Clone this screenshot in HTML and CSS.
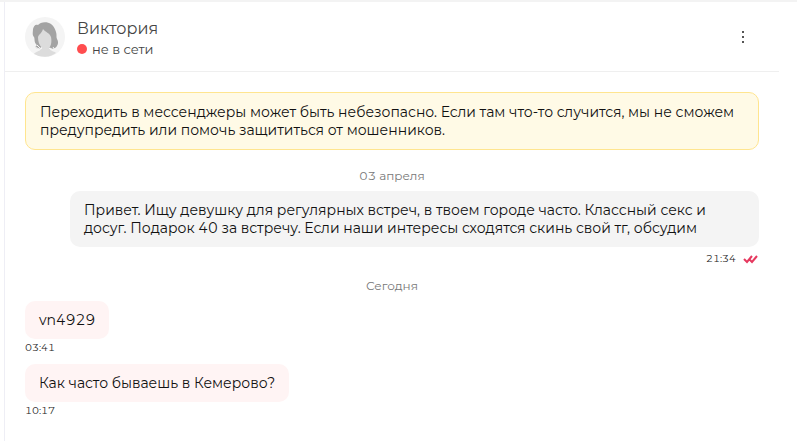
FILE: index.html
```html
<!DOCTYPE html>
<html lang="ru">

<head>
    <meta charset="UTF-8">
    <meta name="viewport" content="width=device-width, initial-scale=1.0">
    <title>Виктория</title>
    <link rel="stylesheet" href="styles.css">
</head>

<body>
    <main class="chat">
        <header class="chat-header">
            <svg class="avatar" viewBox="0 0 40 40" aria-hidden="true">
                <circle cx="20" cy="20" r="20" fill="#f4f4f4"/>
                <path d="M9 37 C11 34 14 35 16 32 H25 C25 34 29 34 31 36 A20 20 0 0 1 9 37Z" fill="#dcdcdc"/>
                <path d="M13 8 C15 5 22 4 26 7 C29 9 30 12 31 15 C32 18 31 20 32 22 C34 25 33 29 30 31 C28 32 25 32 24 30 L16 30 C15 32 12 32 10 30 C12 29 12 28 11 27 C9 25 10 22 9 20 C7 18 8 15 8 12 C9 9 10 7 13 8Z" fill="#a3a3a3"/>
                <path d="M18 12 C20 15 25 16 26 20 C27 25 26 29 24 31 V34 H17 V31 C14 28 13 24 13 20 C14 17 17 16 18 12Z" fill="#dcdcdc"/>
                <path d="M10 30 L14 32 M12 28 L15 31 M25 31 L28 33 M28 30 L30 33" stroke="#f4f4f4" stroke-width="1"/>
            </svg>
            <div class="user">
                <div class="user-name">Виктория</div>
                <div class="user-status"><span class="dot"></span>не в сети</div>
            </div>
            <button class="menu-button" type="button" aria-label="Меню">
                <svg width="4" height="14" viewBox="0 0 4 14">
                    <path d="M1 1h2v2H1zM1 6h2v2H1zM1 11h2v2H1z" fill="#555"/>
                </svg>
            </button>
        </header>

        <section class="messages">
            <p class="warning">Переходить в мессенджеры может быть небезопасно. Если там что-то случится, мы не сможем предупредить или помочь защититься от мошенников.</p>

            <div class="date">03 апреля</div>
            <div class="message message-out">
                <p class="bubble">Привет. Ищу девушку для регулярных встреч, в твоем городе часто. Классный секс и досуг. Подарок 40 за встречу. Если наши интересы сходятся скинь свой тг, обсудим</p>
                <div class="time">
                    21:34
                    <svg width="16" height="10" viewBox="0 0 16 10" aria-label="Прочитано">
                        <path d="M1 5 L4 8 L9 2 M7 6 L9 8 L14 2" fill="none" stroke="#e6395f" stroke-width="2"/>
                    </svg>
                </div>
            </div>

            <div class="date">Сегодня</div>
            <div class="message">
                <p class="bubble">vn4929</p>
                <div class="time">03:41</div>
            </div>
            <div class="message">
                <p class="bubble">Как часто бываешь в Кемерово?</p>
                <div class="time">10:17</div>
            </div>
        </section>
    </main>
</body>

</html>
```

FILE: styles.css
```css
* {
    box-sizing: border-box;
}

body {
    margin: 0;
    border-top: 2px solid #f3f3f3;
    background-color: #fff;
    color: #111;
    font-family: Montserrat, Inter, sans-serif;
    font-size: 14px;
    font-variant-numeric: tabular-nums;
    line-height: 18px;
}

p {
    margin: 0;
}

.chat {
    min-height: calc(100vh - 2px);
    margin-left: 4px;
    margin-right: 18px;
    border-left: 1px solid #eeeef5;
}

.chat-header {
    display: flex;
    align-items: center;
    height: 70px;
    padding: 0 20px;
    border-bottom: 1px solid #efefef;
}

.avatar {
    width: 40px;
    height: 40px;
    margin-right: 12px;
}

.user {
    flex: 1;
    padding-top: 2px;
    color: #444;
}

.user-name {
    font-size: 16px;
    line-height: 22px;
}

.user-status {
    display: flex;
    align-items: center;
    gap: 5px;
    font-size: 13px;
}

.dot {
    width: 10px;
    height: 10px;
    border-radius: 50%;
    background-color: #ff4d4f;
}

.menu-button {
    display: flex;
    align-items: center;
    justify-content: center;
    width: 32px;
    height: 32px;
    padding: 0;
    border: none;
    background: none;
    cursor: pointer;
}

.messages {
    padding: 20px 20px 0;
}

.warning {
    margin-bottom: 15px;
    padding: 10px 14px;
    border: 1px solid #ffe58f;
    border-radius: 10px;
    background-color: #fffae6;
}

.date {
    margin-bottom: 7px;
    padding-top: 3px;
    color: #777;
    font-size: 12px;
    line-height: 16px;
    text-align: center;
}

.message {
    display: flex;
    flex-direction: column;
    align-items: flex-start;
    margin-bottom: 7px;
}

.message-out {
    align-items: flex-end;
    margin-left: 45px;
}

.bubble {
    padding: 10px 14px;
    border-radius: 10px;
    background-color: #fff4f4;
}

.message-out .bubble {
    background-color: #f4f4f4;
}

.time {
    display: flex;
    align-items: center;
    gap: 7px;
    color: #222;
    font-size: 10px;
}

.message-out .time {
    margin-top: 3px;
}
```
